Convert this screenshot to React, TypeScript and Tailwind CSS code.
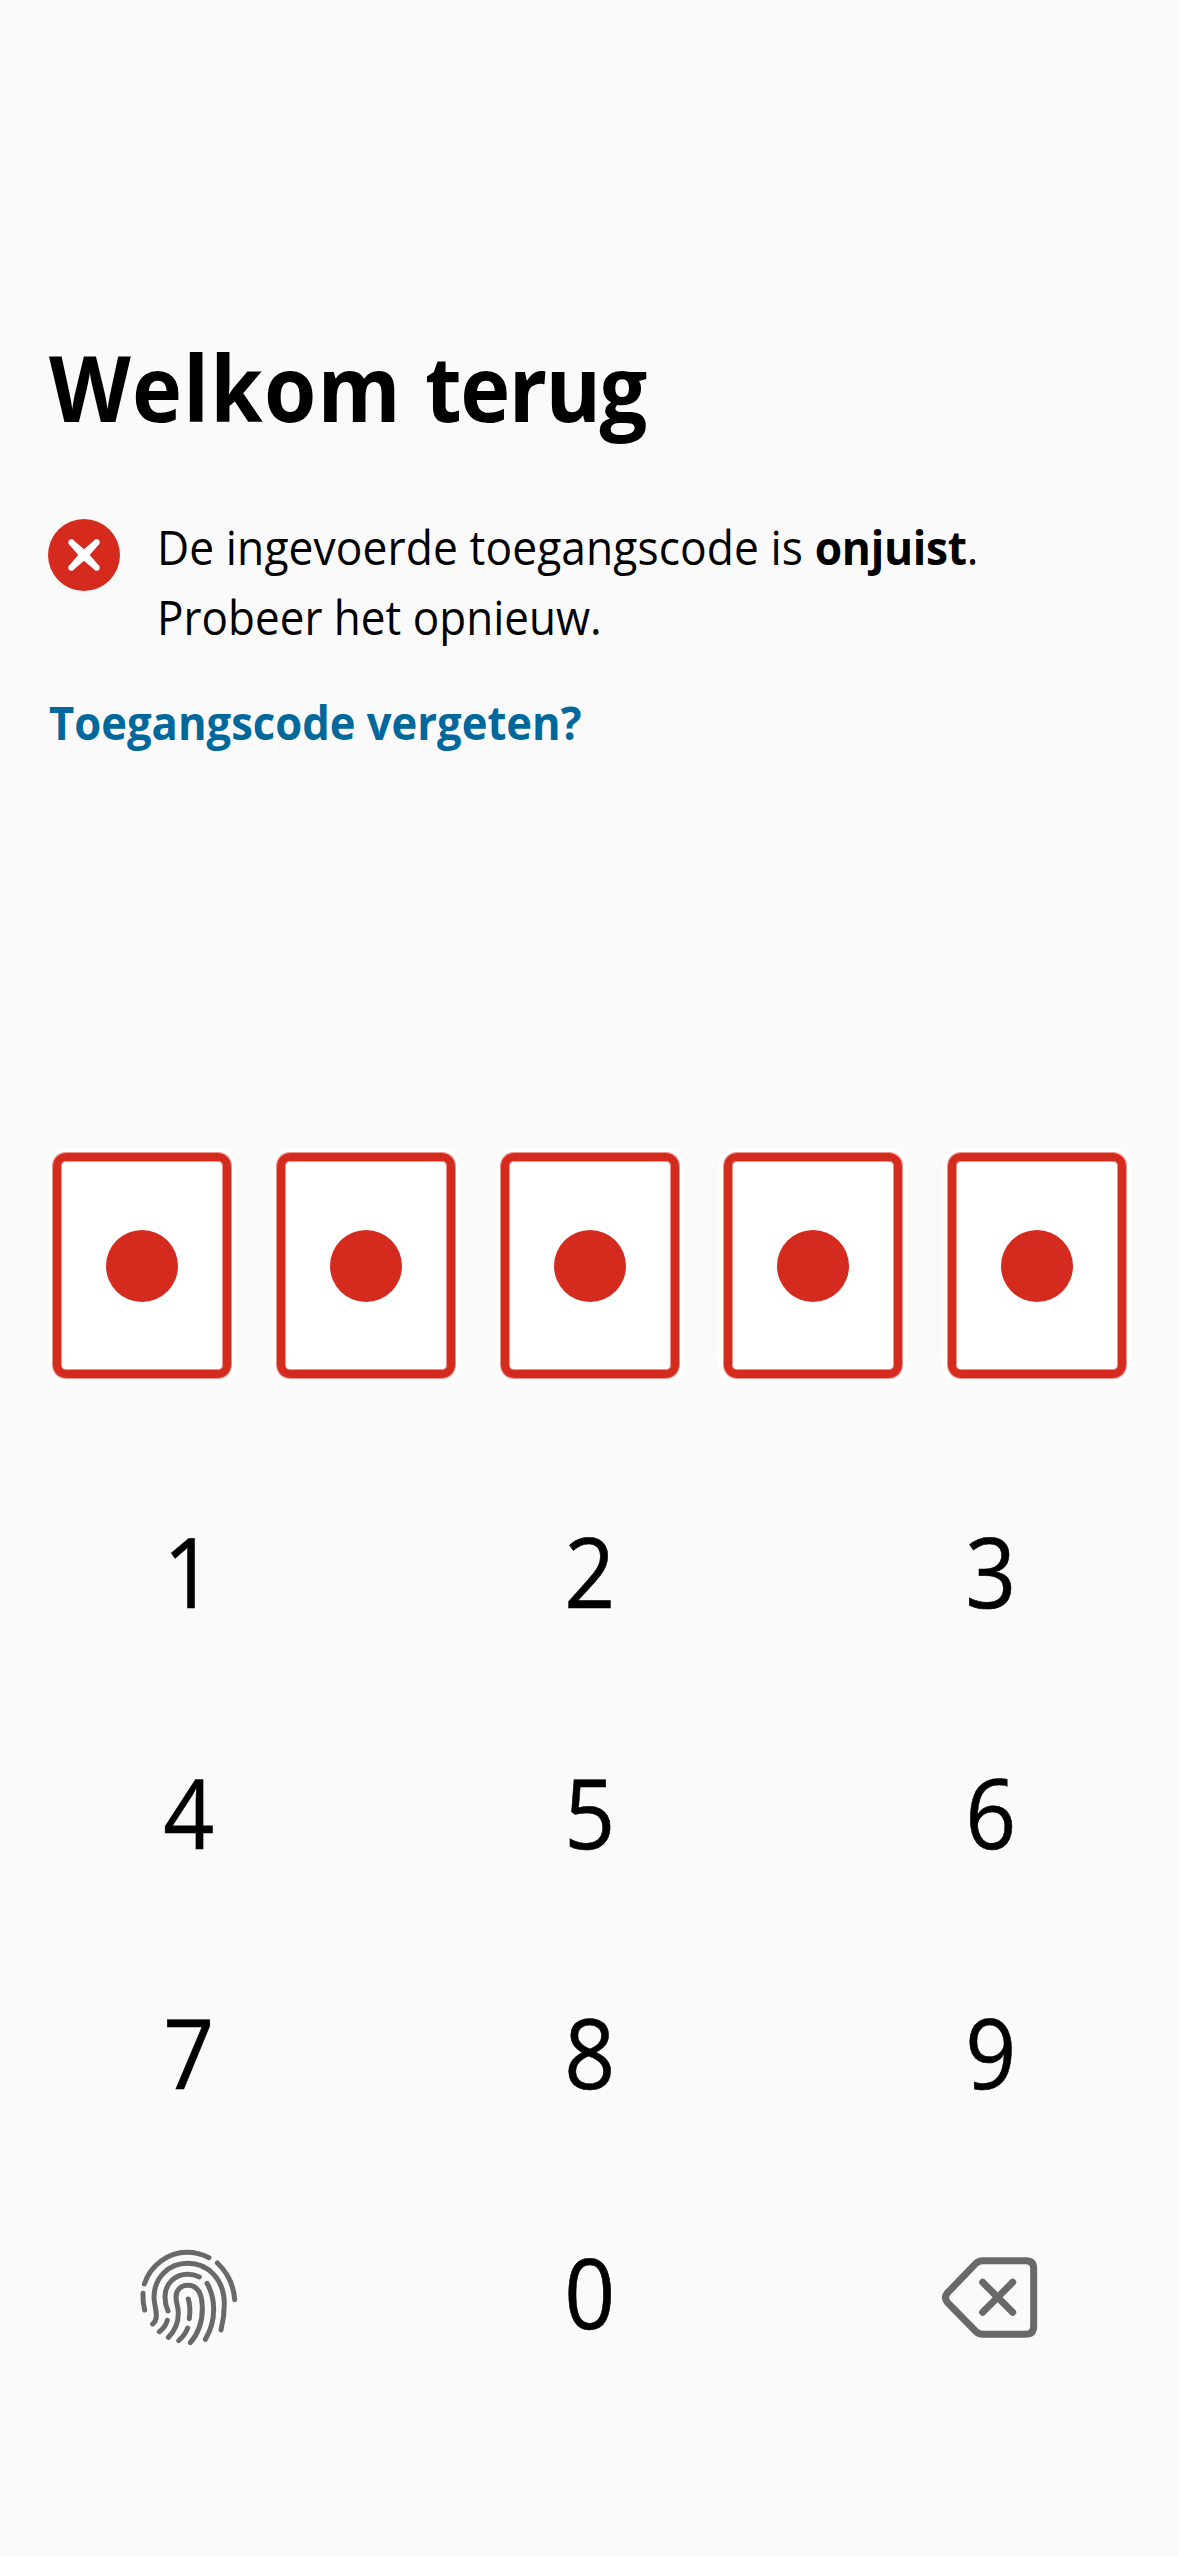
const PIN = [0, 1, 2, 3, 4];
const DIGITS = ['1', '2', '3', '4', '5', '6', '7', '8', '9'];

function ErrorIcon() {
  return (
    <svg viewBox="0 0 216 216" className="mt-[7px] size-[72px] shrink-0">
      <circle cx="108" cy="108" r="108" fill="#d52b1e" />
      <g fill="#fff">
        <path d="M76.5 63.5L108 91L139.5 63.5L152.5 76.5L125 108L152.5 139.5L139.5 152.5L108 125L76.5 152.5L63.5 139.5L91 108L63.5 76.5Z" />
        <circle cx="70" cy="70" r="9" />
        <circle cx="146" cy="70" r="9" />
        <circle cx="70" cy="146" r="9" />
        <circle cx="146" cy="146" r="9" />
      </g>
    </svg>
  );
}

function FingerprintIcon() {
  return (
    <svg viewBox="0 0 420 420" className="size-[140px]" fill="none" stroke="#696969" strokeWidth="15" strokeLinecap="round">
      <path d="M73 162C92 105 145 67 201 67C225 67 247 73 267 83" />
      <path d="M292 99C322 127 341 166 344 209" />
      <path d="M69 190C68 208 70 225 74 240" />
      <path d="M98 282C106 276 109 268 109 256C109 236 102 222 102 202C102 143 146 100 203 100C268 100 313 152 313 222C313 250 309 276 303 300" />
      <path d="M144 243C137 227 135 213 135 200C135 162 164 133 203 133C216 133 228 136 238 141" />
      <path d="M261 160C275 184 281 207 281 238C281 271 272 302 256 328" />
      <path d="M211 338C237 308 247 277 247 236C247 192 233 166 203 166C183 166 168 180 168 200C168 220 175 229 175 250C175 278 167 301 145 322" />
      <path d="M205 207C210 225 211 245 208 266" />
      <path d="M203 294C198 308 189 321 176 332" />
      <path d="M142 271C138 285 130 296 118 305" />
    </svg>
  );
}

function BackspaceIcon() {
  return (
    <svg viewBox="0 0 420 420" className="size-[140px]" fill="none" stroke="#696969" strokeWidth="21" strokeLinecap="round">
      <path d="M188 92H317Q341 92 341 115V289Q341 313 317 313H188Q176 313 167 304L83 218Q70 203 83 188L167 101Q176 92 188 92Z" />
      <path d="M188 157L278 247M278 157L188 247" />
    </svg>
  );
}

function Key({ label }: { label: string }) {
  return (
    <button className="flex h-[240.4px] items-center justify-center text-[97px] leading-[240px]">
      <span className="inline-block scale-x-[0.92] [-webkit-text-stroke:0.6px_black]">{label}</span>
    </button>
  );
}

export default function App() {
  return (
    <main className="flex h-[2556px] w-[1179px] flex-col overflow-hidden bg-[#fafafa] font-['Open_Sans',sans-serif] text-black">
      <header className="flex flex-col items-start px-12 pt-[327px]">
        <h1 className="ml-px origin-left scale-x-[0.93] whitespace-nowrap text-[91px] leading-[120px] font-bold">
          <span className="tracking-[1.3px]">Welkom </span>
          <span className="tracking-[-1.7px]">terug</span>
        </h1>
        <div className="mt-[65px] flex items-start">
          <ErrorIcon />
          <div className="ml-[37px] text-[47px] leading-[70px] whitespace-nowrap">
            <p className="origin-left scale-x-[0.943] tracking-[0.1px]">
              De ingevoerde toegangscode is <b className="font-bold tracking-[-0.3px]">onjuist</b>.
            </p>
            <p className="origin-left scale-x-[0.937]">Probeer het opnieuw.</p>
          </div>
        </div>
        <a className="mt-[35px] ml-px inline-block origin-left scale-x-[0.927] whitespace-nowrap text-[47px] leading-[70px] font-bold text-[#01689b]">
          Toegangscode vergeten?
        </a>
      </header>

      <section className="mt-[391px] flex justify-between px-12">
        {PIN.map((i) => (
          <div key={i} className="h-[235px] w-[188px] rounded-[18px] bg-white p-[5px]">
            <div className="flex h-full items-center justify-center rounded-[13px] border-8 border-[#d52b1e] shadow-[0_0_0_1px_#d52b1e80,inset_0_0_0_1px_#d52b1e80]">
              <span className="size-[72px] rounded-full bg-[#d52b1e]" />
            </div>
          </div>
        ))}
      </section>

      <section className="mt-[67px] grid grid-cols-3 gap-x-6">
        {DIGITS.map((d) => (
          <Key key={d} label={d} />
        ))}
        <button className="flex h-[240.4px] items-center justify-center pt-[17px] pl-[3px]">
          <FingerprintIcon />
        </button>
        <Key label="0" />
        <button className="flex h-[240.4px] items-center justify-center pt-[17px] pr-[2px]">
          <BackspaceIcon />
        </button>
      </section>
    </main>
  );
}
